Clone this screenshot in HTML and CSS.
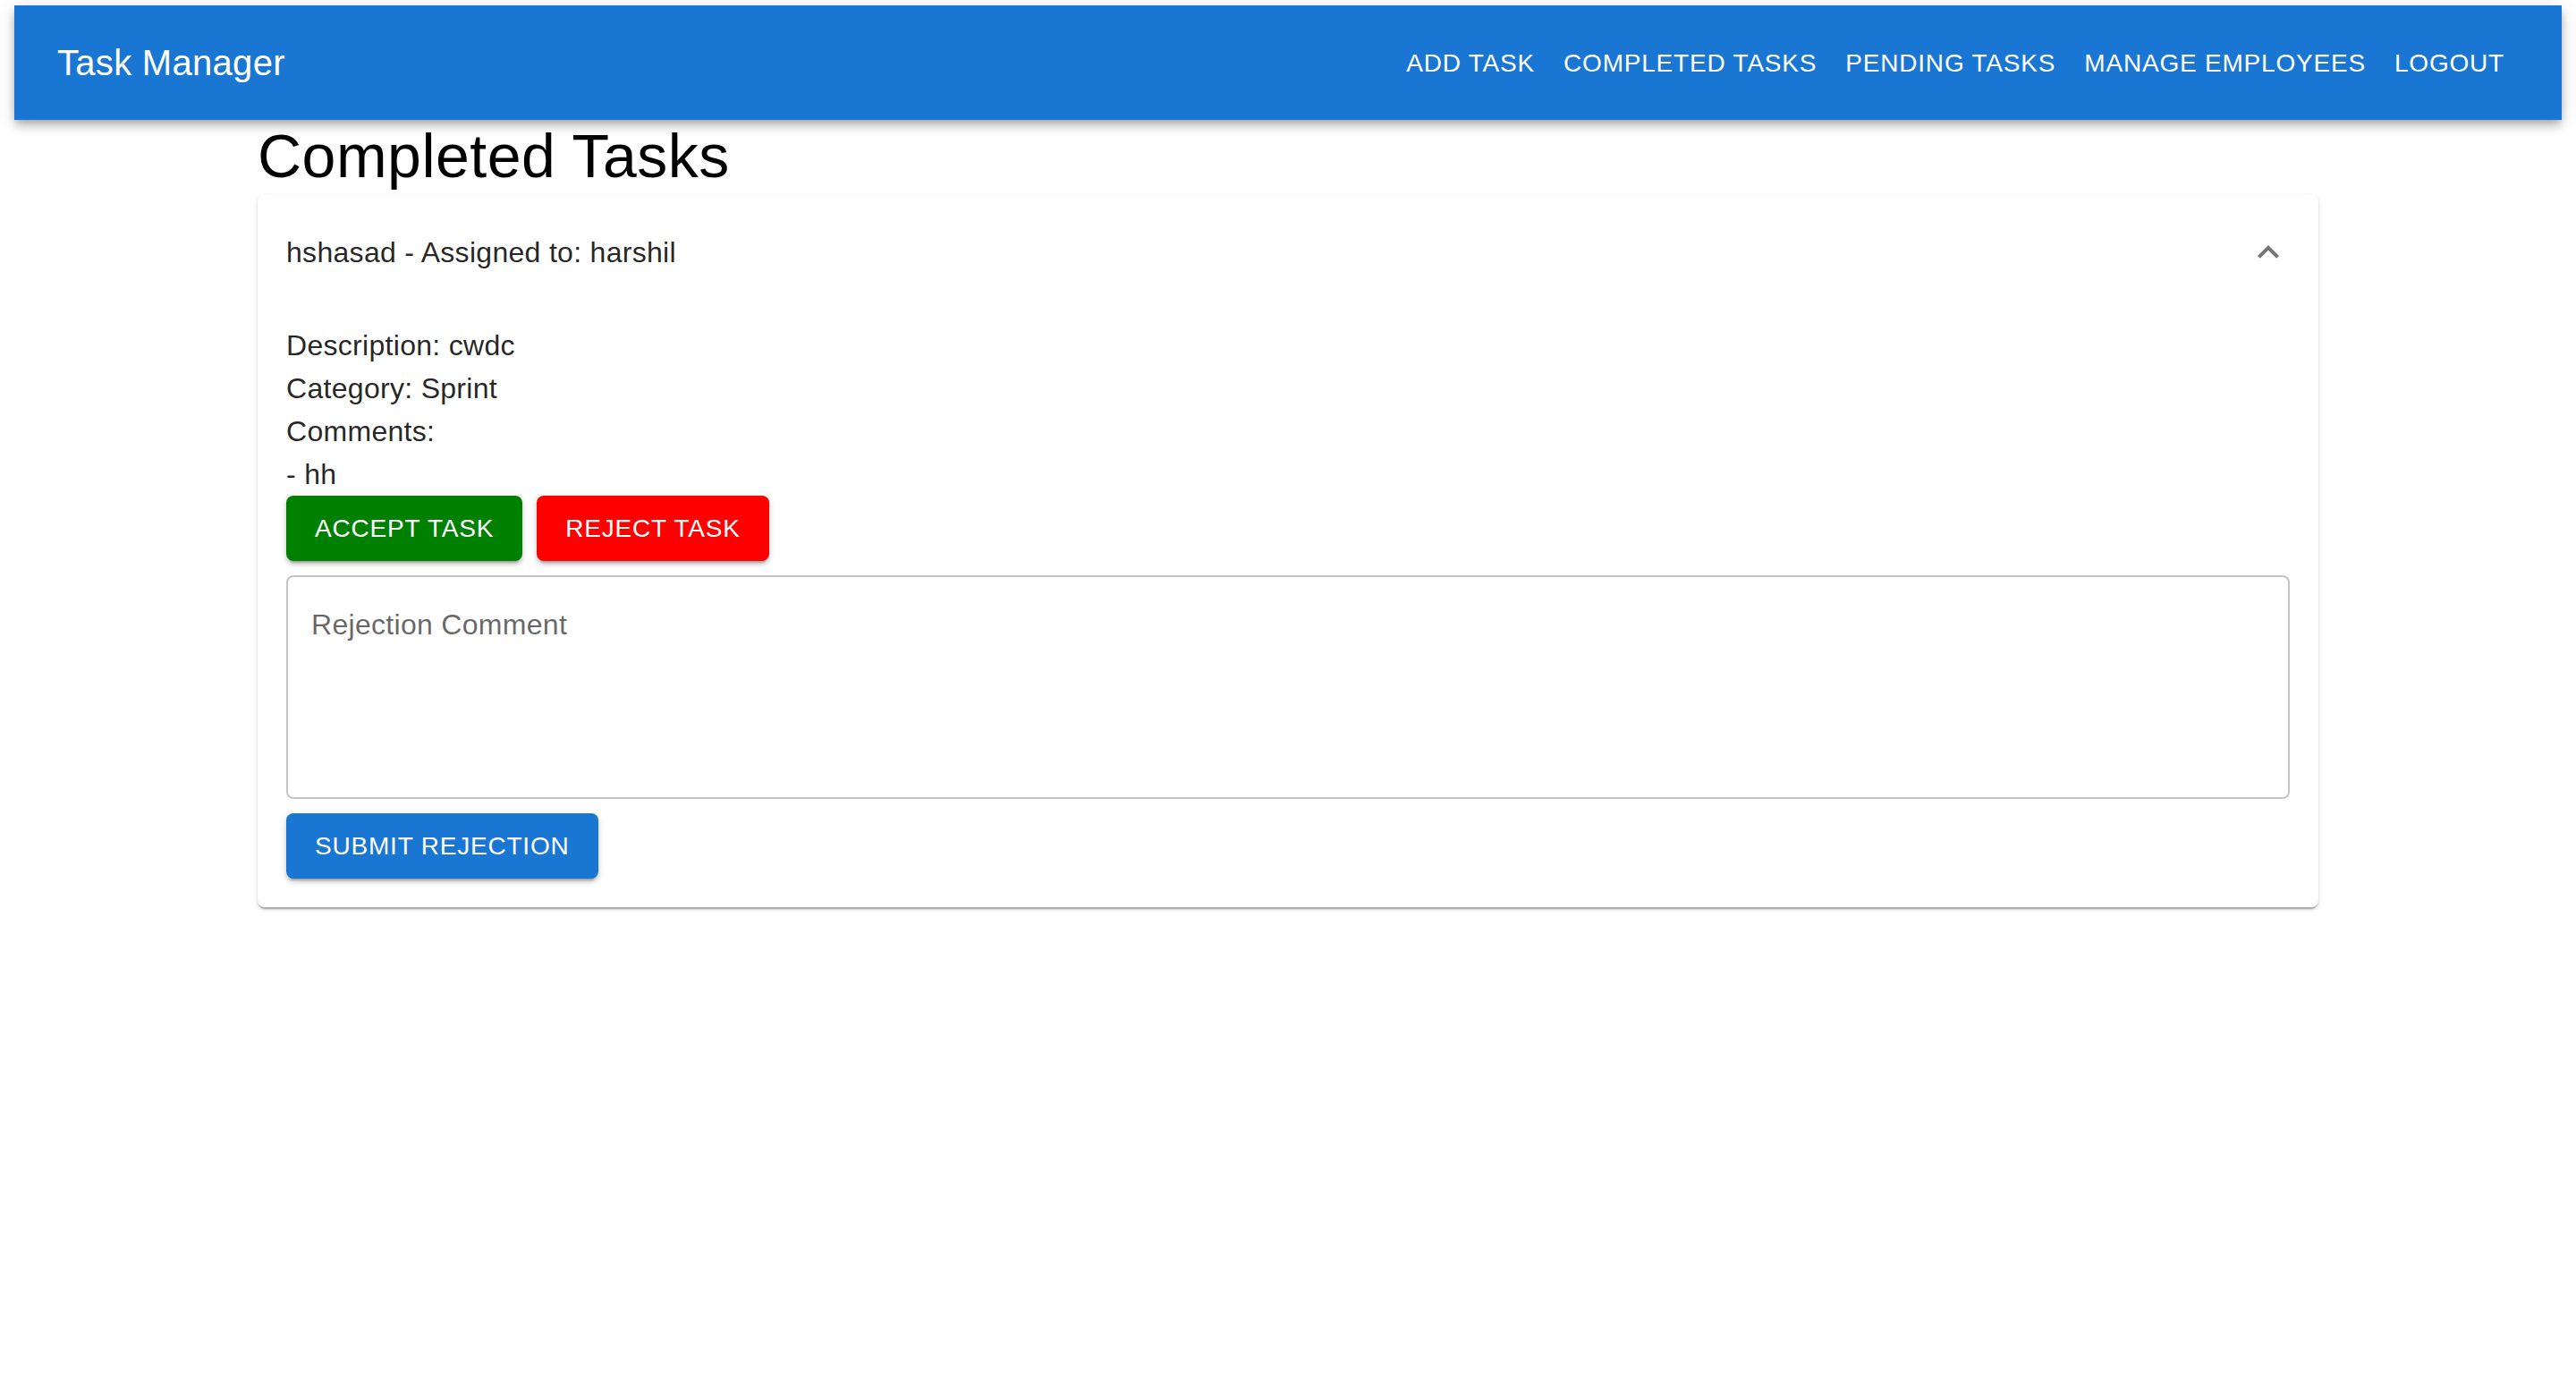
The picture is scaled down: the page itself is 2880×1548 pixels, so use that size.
FILE: index.html
```html
<!DOCTYPE html>
<html lang="en">
<head>
  <meta charset="utf-8">
  <title>Task Manager</title>
  <link rel="stylesheet" href="styles.css">
</head>
<body>
  <header class="app-bar">
    <div class="brand">Task Manager</div>
    <nav class="nav">
      <a class="nav-link" href="#add">ADD TASK</a>
      <a class="nav-link" href="#completed">COMPLETED TASKS</a>
      <a class="nav-link" href="#pending">PENDING TASKS</a>
      <a class="nav-link" href="#employees">MANAGE EMPLOYEES</a>
      <a class="nav-link" href="#logout">LOGOUT</a>
    </nav>
  </header>
  <main class="content">
    <h1 class="page-title">Completed Tasks</h1>
    <section class="card">
      <button class="summary" type="button" aria-expanded="true" aria-controls="task-details">
        <span>hshasad - Assigned to: harshil</span>
        <svg class="chevron" viewBox="0 0 24 24" aria-hidden="true"><path d="M12 8l-6 6 1.41 1.41L12 10.83l4.59 4.58L18 14z"/></svg>
      </button>
      <div class="details" id="task-details">
        <p class="line">Description: cwdc</p>
        <p class="line">Category: Sprint</p>
        <p class="line">Comments:</p>
        <p class="line">- hh</p>
        <div class="actions">
          <button class="btn btn-accept" type="button">ACCEPT TASK</button>
          <button class="btn btn-reject" type="button">REJECT TASK</button>
        </div>
        <form class="rejection">
          <textarea class="comment" rows="4" placeholder="Rejection Comment" aria-label="Rejection Comment"></textarea>
          <button class="btn btn-submit" type="button">SUBMIT REJECTION</button>
        </form>
      </div>
    </section>
  </main>
</body>
</html>
```
FILE: styles.css
```css
* {
  box-sizing: border-box;
}

body {
  margin: 0;
  padding: 6px 16px;
  background: #fff;
  color: #000;
  font-family: Helvetica, "Liberation Sans", Arial, sans-serif;
  font-size: 32px;
  line-height: 48px;
}

.app-bar {
  display: flex;
  align-items: center;
  justify-content: space-between;
  min-height: 128px;
  padding: 0 48px;
  background: #1976d2;
  color: #fff;
  box-shadow: 0 4px 8px -2px rgba(0, 0, 0, 0.2), 0 8px 10px 0 rgba(0, 0, 0, 0.14), 0 2px 20px 0 rgba(0, 0, 0, 0.12);
}

.brand {
  font-size: 40px;
  line-height: 64px;
  letter-spacing: 0.0075em;
}

.nav {
  display: flex;
}

.nav-link,
.btn {
  font-size: 28px;
  line-height: 49px;
  letter-spacing: 0.02857em;
  text-decoration: none;
  color: #fff;
}

.nav-link {
  padding: 12px 16px;
}

.content {
  width: 80vw;
  margin: 0 auto;
}

.page-title {
  margin: 0;
  padding-bottom: 4px;
  font-size: 68px;
  line-height: 80px;
  font-weight: 400;
  letter-spacing: 0.00735em;
}

.card {
  border-radius: 8px;
  background: #fff;
  color: rgba(0, 0, 0, 0.87);
  letter-spacing: 0.00938em;
  box-shadow: 0 4px 2px -2px rgba(0, 0, 0, 0.2), 0 2px 2px 0 rgba(0, 0, 0, 0.14), 0 2px 6px 0 rgba(0, 0, 0, 0.12);
}

.summary {
  display: flex;
  align-items: center;
  justify-content: space-between;
  width: 100%;
  min-height: 128px;
  padding: 0 32px;
  border: 0;
  background: none;
  color: inherit;
  font: inherit;
  letter-spacing: inherit;
  text-align: left;
}

.chevron {
  width: 48px;
  height: 48px;
  fill: rgba(0, 0, 0, 0.54);
}

.details {
  padding: 16px 32px 32px;
}

.line {
  margin: 0;
}

.actions {
  display: flex;
  gap: 16px;
}

.btn {
  padding: 12px 32px;
  border: 0;
  border-radius: 8px;
  font-family: inherit;
  box-shadow: 0 6px 2px -4px rgba(0, 0, 0, 0.2), 0 4px 4px 0 rgba(0, 0, 0, 0.14), 0 2px 10px 0 rgba(0, 0, 0, 0.12);
}

.btn-accept {
  background: green;
}

.btn-reject {
  background: red;
}

.btn-submit {
  background: #1976d2;
}

.rejection {
  display: flex;
  flex-direction: column;
  align-items: flex-start;
  gap: 16px;
  padding-top: 16px;
}

.comment {
  display: block;
  width: 100%;
  padding: 30px 26px 32px;
  border: 2px solid rgba(0, 0, 0, 0.23);
  border-radius: 8px;
  background: none;
  color: inherit;
  font-family: inherit;
  font-size: 32px;
  line-height: 46px;
  letter-spacing: inherit;
  resize: none;
}

.comment::placeholder {
  color: rgba(0, 0, 0, 0.6);
}
```
